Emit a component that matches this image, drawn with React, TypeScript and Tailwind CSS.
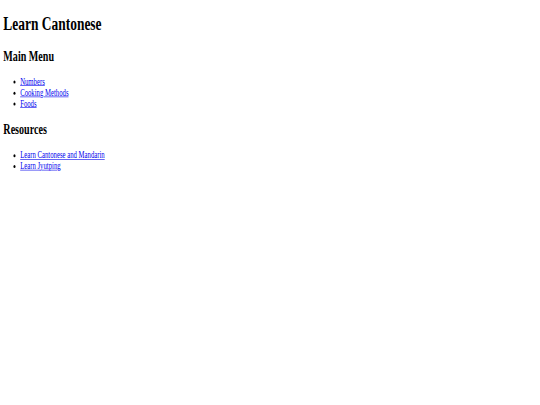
export default function App() {
  const menu = ['Numbers', 'Cooking Methods', 'Foods'];
  const resources = ['Learn Cantonese and Mandarin', 'Learn Jyutping'];

  return (
    <div className="w-[540px] h-[405px] overflow-hidden bg-white">
      {/* page is shown shrunk, like a scaled-down browser capture */}
      <div
        className="w-[1286px] h-[675px] origin-top-left scale-x-[0.42] scale-y-[0.6] text-black text-base"
        style={{ fontFamily: '"Liberation Serif", "Times New Roman", serif' }}
      >
        <div className="p-2 flow-root">
          <h1 className="text-[32px] font-bold my-[13.44px] leading-[36.8px]">Learn Cantonese</h1>
          <h2 className="text-[24px] font-bold mt-[21.44px] mb-[19.92px] leading-[27.6px]">Main Menu</h2>
          <ul className="list-disc pl-10 my-4 leading-[18.4px]">
            {menu.map((m) => (
              <li key={m}>
                <a href="#" className="text-[#0000ee] underline">{m}</a>
              </li>
            ))}
          </ul>
          <h2 className="text-[24px] font-bold my-[19.92px] leading-[27.6px]">Resources</h2>
          <ul className="list-disc pl-10 my-4 leading-[18.4px]">
            {resources.map((r) => (
              <li key={r}>
                <a href="#" className="text-[#0000ee] underline">{r}</a>
              </li>
            ))}
          </ul>
        </div>
      </div>
    </div>
  );
}
